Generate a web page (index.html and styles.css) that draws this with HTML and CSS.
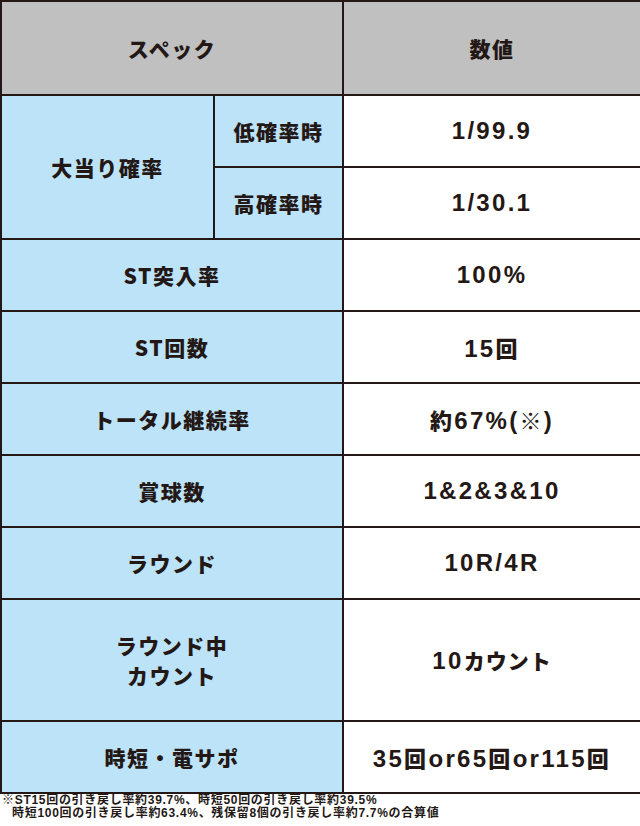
FILE: index.html
```html
<!DOCTYPE html>
<html lang="ja">
<head>
<meta charset="utf-8">
<link rel="stylesheet" href="styles.css">
</head>
<body>
<table class="spec">
  <colgroup>
    <col class="c1"><col class="c2"><col class="c3">
  </colgroup>
  <tr class="head">
    <th colspan="2">スペック</th>
    <th>数値</th>
  </tr>
  <tr class="sub">
    <th rowspan="2" class="lbl">大当り確率</th>
    <th class="lbl">低確率時</th>
    <td class="val">1/99.9</td>
  </tr>
  <tr class="sub">
    <th class="lbl">高確率時</th>
    <td class="val">1/30.1</td>
  </tr>
  <tr class="row"><th colspan="2" class="lbl">ST突入率</th><td class="val">100%</td></tr>
  <tr class="row"><th colspan="2" class="lbl">ST回数</th><td class="val">15<span class="k">回</span></td></tr>
  <tr class="row"><th colspan="2" class="lbl">トータル継続率</th><td class="val"><span class="k">約</span>67%(<span class="k">※</span>)</td></tr>
  <tr class="row"><th colspan="2" class="lbl">賞球数</th><td class="val">1&amp;2&amp;3&amp;10</td></tr>
  <tr class="row"><th colspan="2" class="lbl">ラウンド</th><td class="val">10R/4R</td></tr>
  <tr class="tall"><th colspan="2" class="lbl">ラウンド中<br>カウント</th><td class="val">10<span class="kk">カウント</span></td></tr>
  <tr class="row"><th colspan="2" class="lbl">時短・電サポ</th><td class="val">35<span class="k">回</span>or65<span class="k">回</span>or115<span class="k">回</span></td></tr>
</table>
<p class="note">※ST15回の引き戻し率約39.7%、時短50回の引き戻し率約39.5%<br><span class="ind">時短100回の引き戻し率約63.4%、残保留8個の引き戻し率約7.7%の合算値</span></p>
</body>
</html>
```
FILE: styles.css
```css
html, body {
  margin: 0;
  padding: 0;
  background: #ffffff;
}
body {
  width: 640px;
  height: 826px;
  overflow: hidden;
  font-family: "Noto Sans CJK JP", "Noto Sans", sans-serif;
  color: #231815;
}
.spec {
  width: 640px;
  border-collapse: collapse;
  table-layout: fixed;
}
.c1 { width: 213px; }
.c2 { width: 129px; }
.c3 { width: 298px; }
.spec th, .spec td {
  border: 2px solid #231815;
  padding: 0;
  text-align: center;
  vertical-align: middle;
  font-weight: 900;
}
.head th {
  background: #c0c0c0;
  height: 92px;
  font-size: 21px;
  letter-spacing: 1.5px;
}
.lbl {
  background: #bde3f8;
  font-size: 21px;
  line-height: 30px;
  letter-spacing: 1.5px;
}
.val {
  background: #ffffff;
  font-family: "Liberation Sans", "Noto Sans CJK JP", sans-serif;
  font-size: 24px;
  letter-spacing: 2.3px;
}
.val .k {
  font-family: "Noto Sans CJK JP", sans-serif;
  font-size: 22px;
}
.val .kk {
  font-family: "Noto Sans CJK JP", sans-serif;
  font-size: 21px;
  letter-spacing: 1px;
}
.sub th, .sub td { height: 70px; }
.row th, .row td { height: 70px; }
.tall th, .tall td { height: 120px; }
.note {
  margin: 0 0 0 2px;
  font-family: "Liberation Sans", "Noto Sans CJK JP", sans-serif;
  font-size: 12px;
  line-height: 13px;
  font-weight: 700;
  letter-spacing: 0.7px;
  white-space: nowrap;
}
.ind { padding-left: 10px; }
```
